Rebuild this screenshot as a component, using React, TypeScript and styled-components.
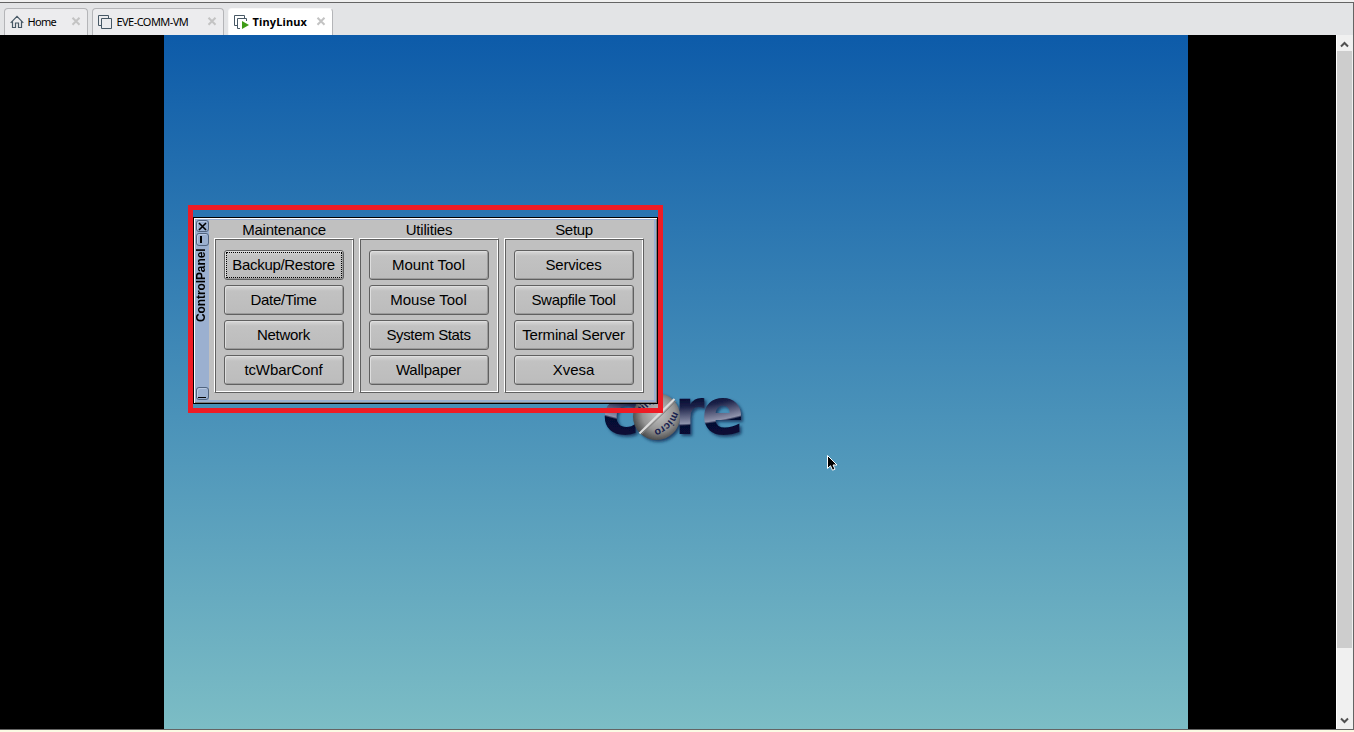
import React from "react";
import styled, { createGlobalStyle } from "styled-components";

const Global = createGlobalStyle`
  body { margin: 0; background: #f4f4f4; overflow: hidden; }
  * { box-sizing: border-box; }
`;

const Page = styled.div`
  width: 1354px;
  height: 732px;
  display: flex;
  flex-direction: column;
  background: #fbfbe4;
  padding-bottom: 2px;
`;
const Frame = styled.div`
  flex: 1;
  display: flex;
  flex-direction: column;
  border-top: 2px solid #f0f0f0;
  min-height: 0;
`;
const Inner = styled.div`
  flex: 1;
  min-height: 0;
  display: flex;
  flex-direction: column;
  border: 1px solid #646464;
  border-left: 0;
`;
const TabBar = styled.div`
  height: 32px;
  background: #e3e4e6;
  display: flex;
  align-items: flex-end;
  gap: 4px;
  padding-left: 4px;
`;
const Tab = styled.div<{ $w: number; $active?: boolean }>`
  width: ${(p) => p.$w}px;
  height: 27px;
  display: flex;
  align-items: center;
  padding: 0 6px 0 5px;
  border: 1px solid ${(p) => (p.$active ? "#f8f8f8" : "#b4b5b8")};
  border-right-color: #b4b5b8;
  border-bottom: 0;
  border-radius: 4px 4px 0 0;
  background: ${(p) => (p.$active ? "#ffffff" : "#ececee")};
  font: ${(p) => (p.$active ? "bold" : "normal")} 11px "Noto Sans", "Open Sans", sans-serif;
  color: #000;
`;
const TabLabel = styled.span<{ $ls: number }>`
  flex: 1;
  margin-left: 3.5px;
  padding-bottom: 2px;
  letter-spacing: ${(p) => p.$ls}px;
  white-space: nowrap;
`;
const Viewport = styled.div`
  flex: 1;
  min-height: 0;
  display: flex;
  background: #000;
`;
const Desktop = styled.div`
  position: relative;
  width: 1024px;
  margin-left: 164px;
  margin-right: auto;
  background: linear-gradient(#0d5ba9, #4a92b9 55%, #7cbdc5);
`;
const ScrollBar = styled.div`
  width: 17px;
  background: #f0f0f0;
  border-left: 1px solid #fff;
  display: flex;
  flex-direction: column;
`;
const ArrowBox = styled.div<{ $down?: boolean }>`
  height: 16px;
  display: flex;
  align-items: center;
  justify-content: center;
  padding: ${(p) => (p.$down ? "0 1px 2px 0" : "2px 1px 0 0")};
`;
const Thumb = styled.div`
  height: 597px;
  width: 15px;
  background: #cdcdcd;
  margin-bottom: auto;
`;
const Highlight = styled.div`
  position: absolute;
  left: 24px;
  top: 170px;
  width: 475px;
  height: 208px;
  border: 5px solid #ee1c25;
  padding-top: 7px;
`;
const Window = styled.div`
  width: 465px;
  height: 187px;
  border: 1px solid #000;
  background: #c0c0c0;
  box-shadow: inset 1px 1px 0 #fff, inset -1px -1px 0 #808080, inset -3px -3px 0 #9bb0d0, inset 2px 2px 0 #9bb0d0;
  display: flex;
  padding: 1px 0 0 1px;
`;
const TitleStrip = styled.div`
  width: 14px;
  height: 183px;
  background: #9bb0d0;
  display: flex;
  flex-direction: column;
  align-items: center;
  gap: 1px;
  padding: 1px 0 2px;
`;
const TitleButton = styled.div<{ $h?: number }>`
  width: 13px;
  height: ${(p) => p.$h ?? 12}px;
  border: 1px solid #51647f;
  border-radius: 3px;
  box-shadow: inset 1px 1px 0 #b9c9e2;
  display: flex;
  flex: none;
  align-items: center;
  justify-content: center;
`;
const TitleText = styled.div`
  flex: 1;
  align-self: flex-start;
  writing-mode: vertical-rl;
  transform: rotate(180deg);
  text-align: right;
  padding-bottom: 2px;
  font: bold 12px/12px "Liberation Sans", Arial, sans-serif;
  letter-spacing: -0.1px;
  color: #000;
`;
const Columns = styled.div`
  display: flex;
  gap: 5px;
  padding-left: 5px;
`;
const Column = styled.div`
  width: 140px;
  display: flex;
  flex-direction: column;
`;
const Heading = styled.div<{ $ls: number }>`
  height: 19px;
  text-align: center;
  font: 15px/22px "Liberation Sans", Arial, sans-serif;
  letter-spacing: ${(p) => p.$ls}px;
  color: #000;
`;
const Group = styled.div`
  height: 155px;
  border: 1px solid;
  border-color: #fff #606060 #606060 #fff;
  box-shadow: inset 1px 1px 0 #606060, inset -1px -1px 0 #fff;
  padding: 11px 9px 0;
  display: flex;
  flex-direction: column;
  gap: 5px;
`;
const Button = styled.div<{ $ls: number; $focus?: boolean }>`
  position: relative;
  height: 30px;
  border: 1px solid #606060;
  border-radius: 3px;
  background: linear-gradient(#d8d8d8, #c2c2c2 5px, #bcbcbc);
  box-shadow: inset 1px 1px 0 #dedede, inset -1px -1px 0 #9b9b9b;
  text-align: center;
  font: 15px/28px "Liberation Sans", Arial, sans-serif;
  letter-spacing: ${(p) => p.$ls}px;
  padding-right: 1px;
  white-space: nowrap;
  color: #000;
  ${(p) =>
    p.$focus &&
    `&::after { content: ""; position: absolute; inset: 1px; border: 1px dotted #000; }`}
`;
const Floating = styled.svg<{ $x: number; $y: number }>`
  position: absolute;
  left: ${(p) => p.$x}px;
  top: ${(p) => p.$y}px;
`;

const Close = () => (
  <svg width="10" height="10" viewBox="0 0 10 10">
    <path d="M1.500 .8l7 7M8.500 .8l-7 7" stroke="#c3c3c3" strokeWidth="2" />
  </svg>
);
const HomeIcon = () => (
  <svg width="14" height="14" viewBox="0 0 14 14" fill="none" stroke="#475865">
    <path d="M.7 7.800L7 1.400l6.300 6.400M2.500 6.500v6h3v-4.500h3v4.500h3v-6" strokeWidth="1.200" />
  </svg>
);
const VmIcon = ({ running }: { running?: boolean }) => (
  <svg width="15" height="14" viewBox="0 0 15 14" fill="none" stroke="#475865">
    <path d="M3 10.500H.5V.5h10V3" />
    <path d={running ? "M6 13.500H3.500v-10h9V6" : "M3.500 3.500h10v10h-10z"} />
    {running && <path d="M8 6v8l7-4z" fill="#3f9c17" stroke="none" />}
  </svg>
);

const columns = [
  { title: "Maintenance", ls: -0.2, items: [["Backup/Restore", -0.3], ["Date/Time", -0.3], ["Network", -0.3], ["tcWbarConf", -0.1]] },
  { title: "Utilities", ls: -0.2, items: [["Mount Tool", 0], ["Mouse Tool", 0], ["System Stats", -0.35], ["Wallpaper", -0.2]] },
  { title: "Setup", ls: -0.3, items: [["Services", -0.2], ["Swapfile Tool", -0.3], ["Terminal Server", -0.17], ["Xvesa", 0]] },
] as { title: string; ls: number; items: [string, number][] }[];

const Logo = () => (
  <Floating $x={426} $y={325} width="180" height="125" viewBox="590 360 180 125">
    <defs>
      <radialGradient id="glyph" gradientUnits="userSpaceOnUse" cx="674" cy="169" r="266">
        <stop offset=".865" stopColor="#060d32" />
        <stop offset=".895" stopColor="#1b2148" />
        <stop offset=".958" stopColor="#8f93ac" />
        <stop offset=".966" stopColor="#060d32" />
        <stop offset="1" stopColor="#071036" />
      </radialGradient>
      <radialGradient id="ball" cx=".55" cy=".45" r=".58">
        <stop offset="0" stopColor="#c2c2c2" />
        <stop offset=".6" stopColor="#949494" />
        <stop offset="1" stopColor="#454545" />
      </radialGradient>
      <filter id="shade" x="-20%" y="-20%" width="150%" height="150%">
        <feDropShadow dx="2" dy="2" stdDeviation="1.800" floodColor="#0a2c55" floodOpacity=".8" />
      </filter>
    </defs>
    <g filter="url(#shade)">
      <g fontFamily="DejaVu Sans, sans-serif" fontWeight="bold" fontSize="64" fill="url(#glyph)">
        <text x="602" y="434">c</text>
        <text x="674.500" y="434" textLength="30" lengthAdjust="spacingAndGlyphs">r</text>
        <text x="701.500" y="434" textLength="42.500" lengthAdjust="spacingAndGlyphs">e</text>
      </g>
      <circle cx="656.500" cy="416.500" r="23.500" fill="url(#ball)" />
    </g>
    <path d="M639.500 433.500L674.500 399" stroke="#dcdcdc" strokeWidth="2.200" />
    <path d="M641.500 434.500L676 401" stroke="#7c7c7c" strokeWidth="1" />
    <path id="arc" d="M673 411Q669 425 652 431" fill="none" />
    <text fontFamily="Liberation Sans, sans-serif" fontWeight="bold" fontSize="10.500" fill="#18214e">
      <textPath href="#arc">micro</textPath>
    </text>
    <text x="642" y="413" transform="rotate(-45 642 413)" fontFamily="Liberation Sans, sans-serif" fontWeight="bold" fontSize="11" fill="#18214e">tiny</text>
  </Floating>
);

export default function App() {
  return (
    <Page>
      <Global />
      <Frame>
        <Inner>
          <TabBar>
            <Tab $w={84}><HomeIcon /><TabLabel $ls={-0.7}>Home</TabLabel><Close /></Tab>
            <Tab $w={132}><VmIcon /><TabLabel $ls={-0.55}>EVE-COMM-VM</TabLabel><Close /></Tab>
            <Tab $w={105} $active><VmIcon running /><TabLabel $ls={0.15}>TinyLinux</TabLabel><Close /></Tab>
          </TabBar>
          <Viewport>
            <Desktop>
              <Logo />
              <Highlight>
                <Window>
                  <TitleStrip>
                    <TitleButton><svg width="9" height="9"><path d="M1 1l7 7M8 1l-7 7" stroke="#000" strokeWidth="1.600" /></svg></TitleButton>
                    <TitleButton $h={13}><svg width="9" height="9"><path d="M3 1v7" stroke="#000" strokeWidth="2" /></svg></TitleButton>
                    <TitleText>ControlPanel</TitleText>
                    <TitleButton $h={13}><svg width="9" height="9"><path d="M0 8.500h8" stroke="#000" /></svg></TitleButton>
                  </TitleStrip>
                  <Columns>
                    {columns.map((c) => (
                      <Column key={c.title}>
                        <Heading $ls={c.ls}>{c.title}</Heading>
                        <Group>
                          {c.items.map(([t, ls]) => (
                            <Button key={t} $ls={ls} $focus={t === "Backup/Restore"}>{t}</Button>
                          ))}
                        </Group>
                      </Column>
                    ))}
                  </Columns>
                </Window>
              </Highlight>
              <Floating $x={663} $y={420} width="12" height="17" viewBox="0 0 12 17">
                <path d="M.5.5v13l3-2.800 2 4.500 2.500-1-2-4.200h4z" fill="#000" stroke="#fff" />
              </Floating>
            </Desktop>
            <ScrollBar>
              <ArrowBox><svg width="9" height="7"><path d="M1 5.500L4.500 2 8 5.500" fill="none" stroke="#505050" strokeWidth="2" /></svg></ArrowBox>
              <Thumb />
              <ArrowBox $down><svg width="9" height="7"><path d="M1 1.500L4.500 5 8 1.500" fill="none" stroke="#505050" strokeWidth="2" /></svg></ArrowBox>
            </ScrollBar>
          </Viewport>
        </Inner>
      </Frame>
    </Page>
  );
}
